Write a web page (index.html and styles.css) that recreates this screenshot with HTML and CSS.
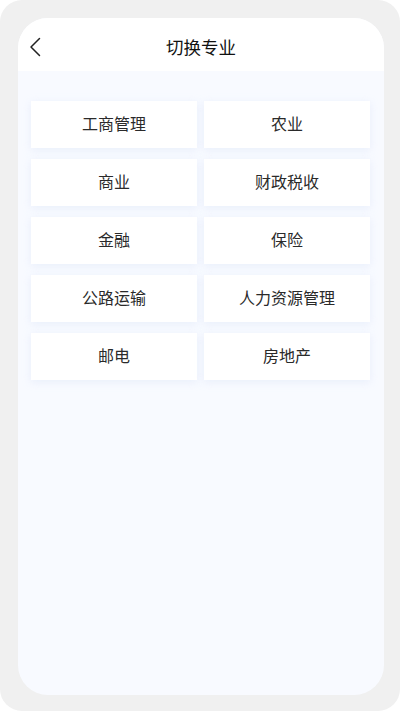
FILE: index.html
```html
<!DOCTYPE html>
<html lang="zh">
<head>
<meta charset="utf-8">
<link rel="stylesheet" href="styles.css">
</head>
<body>
<div class="frame">
  <div class="screen">
    <header class="header">
      <span class="back">
        <svg width="12" height="20" viewBox="0 0 12 20"><path d="M10.5 1.5 L2 10 L10.5 18.5" fill="none" stroke="#222" stroke-width="1.5" stroke-linecap="round" stroke-linejoin="round"/></svg>
      </span>
      <h1 class="title">切换专业</h1>
    </header>
    <main class="body">
      <div class="grid">
        <div class="card">工商管理</div>
        <div class="card">农业</div>
        <div class="card">商业</div>
        <div class="card">财政税收</div>
        <div class="card">金融</div>
        <div class="card">保险</div>
        <div class="card">公路运输</div>
        <div class="card">人力资源管理</div>
        <div class="card">邮电</div>
        <div class="card">房地产</div>
      </div>
    </main>
  </div>
</div>
</body>
</html>
```

FILE: styles.css
```css
* { box-sizing: border-box; }
html, body { margin: 0; padding: 0; background: #ffffff; }
body {
  width: 400px;
  height: 711px;
  font-family: "Noto Sans CJK SC", "Noto Sans", sans-serif;
}
.frame {
  width: 400px;
  height: 711px;
  background: #f0f0f0;
  border-radius: 22px;
  padding: 18px 16px 16px 18px;
}
.screen {
  width: 366px;
  height: 677px;
  background: #f8faff;
  border-radius: 30px;
  overflow: hidden;
  display: flex;
  flex-direction: column;
}
.header {
  height: 53px;
  background: #ffffff;
  display: flex;
  align-items: center;
  justify-content: center;
  position: relative;
}
.back {
  position: absolute;
  left: 11px;
  top: 19px;
  width: 12px;
  height: 20px;
  display: block;
}
.back svg { display: block; }
.title {
  margin: 0;
  font-size: 17.5px;
  font-weight: 400;
  color: #111;
  line-height: 1;
  padding-top: 4px;
}
.body {
  flex: 1;
  padding: 30px 13px 0 13px;
}
.grid {
  display: grid;
  grid-template-columns: 166px 166px;
  column-gap: 7px;
  row-gap: 11px;
}
.card {
  height: 47px;
  background: #ffffff;
  display: flex;
  align-items: center;
  justify-content: center;
  font-size: 16px;
  line-height: 1;
  padding-bottom: 3px;
  color: #2a2a2a;
  box-shadow: 0 2px 8px rgba(210, 222, 245, 0.4);
}
```
